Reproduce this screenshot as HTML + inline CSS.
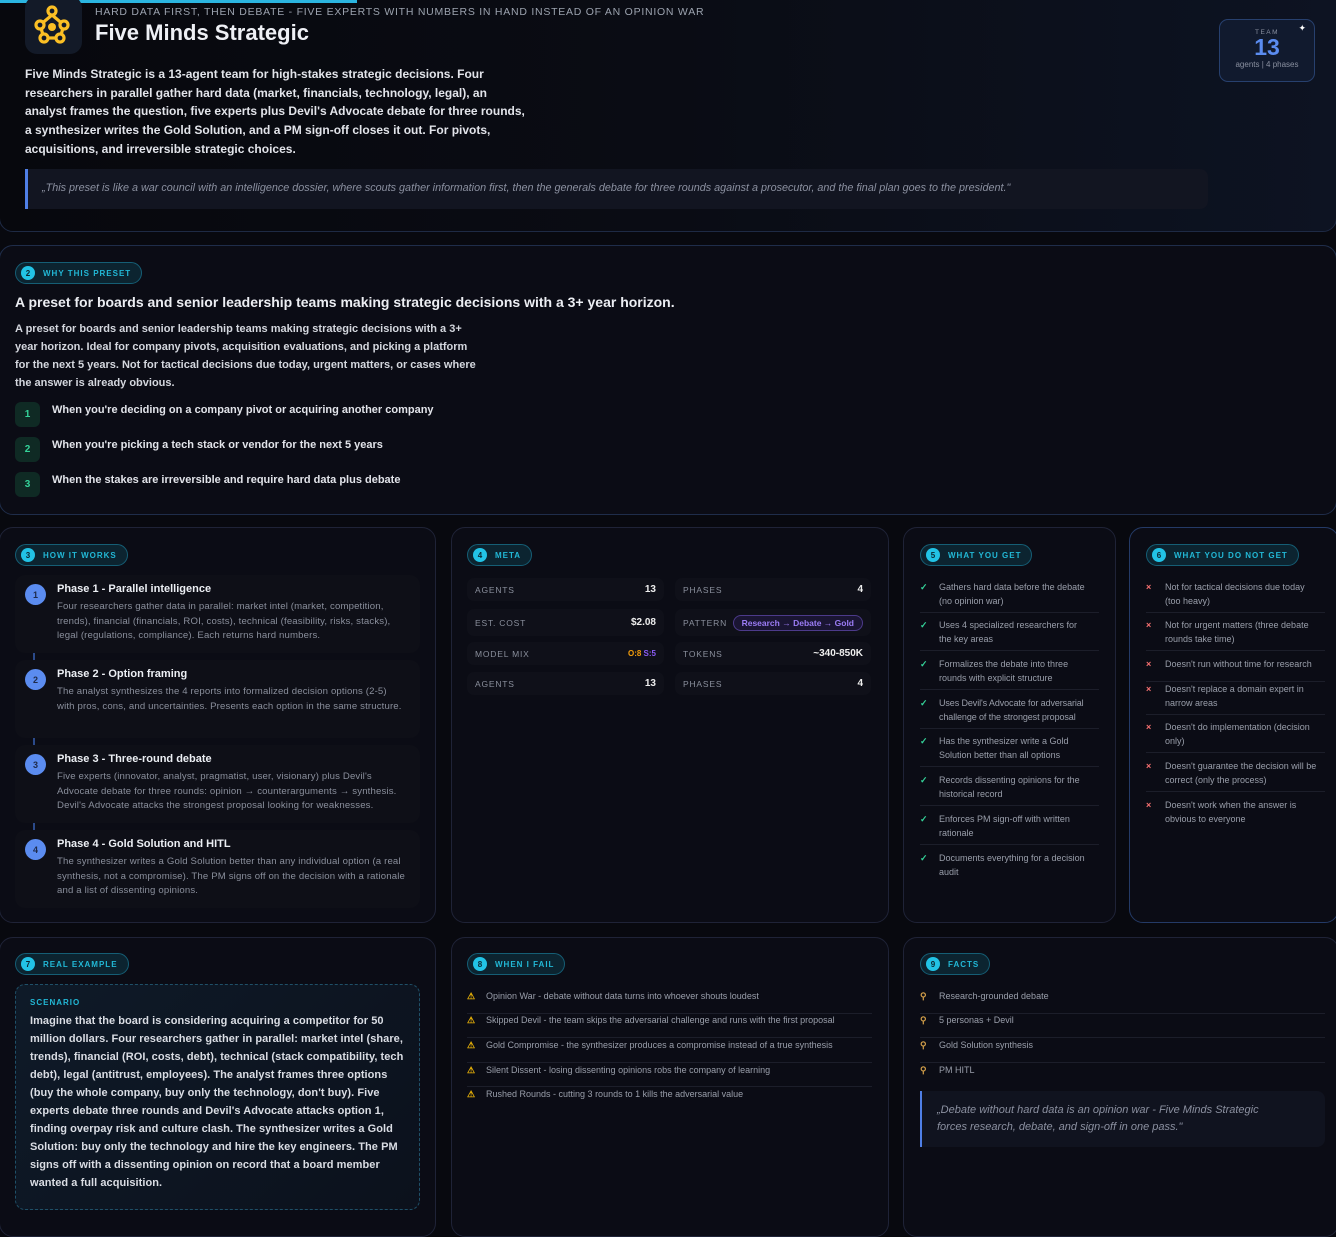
<!DOCTYPE html>
<html><head><meta charset="utf-8"><style>
*{box-sizing:border-box;margin:0;padding:0}
body{width:1336px;height:1231px;background:#08090f;font-family:"Liberation Sans",sans-serif;color:#e5e7eb;position:relative;overflow:hidden}
.card{position:absolute;border:1px solid #1f2337;border-radius:14px;background:#0b0c15}
.pill{position:absolute;height:22px;border:1px solid #155e75;background:#0c2430;border-radius:11px;display:flex;align-items:center;padding:0 10px 0 5px;font-size:8px;font-weight:bold;letter-spacing:1px;color:#22b8d6}
.pill b{width:14px;height:14px;border-radius:50%;background:#22c3e6;color:#0b2530;font-size:8px;display:inline-flex;align-items:center;justify-content:center;margin-right:8px;letter-spacing:0}
.abs{position:absolute}
.ph{position:absolute;left:15px;width:405px;height:78px;background:#0e0f17;border-radius:10px}
.ph .n{position:absolute;left:10px;top:9px;width:21px;height:21px;border-radius:50%;background:#5b8cf0;color:#1e2a4a;font-size:9px;font-weight:bold;display:flex;align-items:center;justify-content:center}
.ph h4{position:absolute;left:42px;top:8px;font-size:11px;color:#eceff4}
.ph p{position:absolute;left:42px;top:25px;width:348px;font-size:9.6px;line-height:14.5px;color:#8a8f9c;letter-spacing:.15px}
.conn{position:absolute;left:33px;width:2px;height:7px;background:#2b4a8a}
.mr{position:absolute;height:23px;background:#0f1019;border-radius:7px;font-size:8.5px;letter-spacing:.8px;color:#8a8f9c;display:flex;align-items:center;justify-content:space-between;padding:0 8px}
.mr span:last-child{color:#eee;font-weight:bold;letter-spacing:0;font-size:10px}
.li{position:absolute;font-size:9px;line-height:14px;color:#9a9fab;border-bottom:1px solid #1c1e2a}
.li i{position:absolute;left:0;top:0;font-style:normal;font-weight:bold}
.g{width:179px;padding-right:12px}
</style></head><body>
<!-- header -->
<div class="card" style="left:-1px;top:-14px;width:1338px;height:246px;background:linear-gradient(90deg,#07080d 0%,#0a0c14 50%,#0d1322 100%);border-color:#1e2a44"></div>
<div class="abs" style="left:0;top:0;width:357px;height:3px;background:#2bb5e0"></div>
<div class="abs" style="left:25px;top:-4px;width:57px;height:58px;background:#131a28;border-radius:12px"></div>
<svg class="abs" style="left:25px;top:0" width="57" height="54" viewBox="25 0 57 54"><g fill="none" stroke="#fbbf24" stroke-width="3.2"><path d="M52 15 L40 25 L44 38 L60 38 L64 25 Z"/><circle cx="52" cy="11" r="4" fill="#131a28"/><circle cx="40" cy="25" r="4" fill="#131a28"/><circle cx="64" cy="25" r="4" fill="#131a28"/><circle cx="44" cy="38" r="4" fill="#131a28"/><circle cx="60" cy="38" r="4" fill="#131a28"/></g><circle cx="52" cy="27" r="4" fill="#fbbf24"/></svg>
<div class="abs" style="left:95px;top:6px;font-size:10.5px;letter-spacing:.75px;color:#9ca3af">HARD DATA FIRST, THEN DEBATE - FIVE EXPERTS WITH NUMBERS IN HAND INSTEAD OF AN OPINION WAR</div>
<div class="abs" style="left:95px;top:20px;font-size:22px;font-weight:bold;color:#eef0f5">Five Minds Strategic</div>
<div class="abs" style="left:25px;top:65px;width:505px;font-size:12px;line-height:18.7px;font-weight:bold;color:#e2e4ea">Five Minds Strategic is a 13-agent team for high-stakes strategic decisions. Four researchers in parallel gather hard data (market, financials, technology, legal), an analyst frames the question, five experts plus Devil's Advocate debate for three rounds, a synthesizer writes the Gold Solution, and a PM sign-off closes it out. For pivots, acquisitions, and irreversible strategic choices.</div>
<div class="abs" style="left:25px;top:169px;width:1183px;height:40px;background:#121521;border-left:3px solid #4f7fe6;border-radius:0 8px 8px 0;font-size:10.8px;font-style:italic;color:#8b90a0;padding:13px 0 0 14px">„This preset is like a war council with an intelligence dossier, where scouts gather information first, then the generals debate for three rounds against a prosecutor, and the final plan goes to the president."</div>
<div class="abs" style="left:1219px;top:19px;width:96px;height:63px;border:1px solid #27406e;border-radius:9px;background:#111a2e;text-align:center">
<div style="font-size:6.5px;letter-spacing:1.5px;color:#8a90a0;margin-top:9px">TEAM</div>
<div style="font-size:23px;font-weight:bold;color:#5b8cf0;line-height:22px">13</div>
<div style="font-size:8px;color:#8a90a0;margin-top:2px">agents | 4 phases</div>
<div style="position:absolute;right:8px;top:3px;font-size:9px;color:#fff">✦</div></div>

<!-- section 2 -->
<div class="card" style="left:-1px;top:245px;width:1338px;height:270px;border-color:#1f2d4a"></div>
<div class="pill" style="left:15px;top:262px"><b>2</b>WHY THIS PRESET</div>
<div class="abs" style="left:15px;top:294px;font-size:14px;font-weight:bold;color:#eceef3">A preset for boards and senior leadership teams making strategic decisions with a 3+ year horizon.</div>
<div class="abs" style="left:15px;top:320px;width:462px;font-size:11px;line-height:18px;font-weight:bold;color:#d4d7de">A preset for boards and senior leadership teams making strategic decisions with a 3+ year horizon. Ideal for company pivots, acquisition evaluations, and picking a platform for the next 5 years. Not for tactical decisions due today, urgent matters, or cases where the answer is already obvious.</div>
<div class="abs" style="left:15px;top:402px;width:25px;height:25px;border-radius:6px;background:#0f2a24;color:#34d399;font-size:10px;font-weight:bold;text-align:center;line-height:25px">1</div>
<div class="abs" style="left:15px;top:437px;width:25px;height:25px;border-radius:6px;background:#0f2a24;color:#34d399;font-size:10px;font-weight:bold;text-align:center;line-height:25px">2</div>
<div class="abs" style="left:15px;top:472px;width:25px;height:25px;border-radius:6px;background:#0f2a24;color:#34d399;font-size:10px;font-weight:bold;text-align:center;line-height:25px">3</div>
<div class="abs" style="left:52px;top:404px;font-size:11px;font-weight:bold;color:#e2e4ea">When you're deciding on a company pivot or acquiring another company</div>
<div class="abs" style="left:52px;top:439px;font-size:11px;font-weight:bold;color:#e2e4ea">When you're picking a tech stack or vendor for the next 5 years</div>
<div class="abs" style="left:52px;top:474px;font-size:11px;font-weight:bold;color:#e2e4ea">When the stakes are irreversible and require hard data plus debate</div>

<!-- how it works -->
<div class="card" style="left:-1px;top:527px;width:437px;height:396px"></div>
<div class="pill" style="left:15px;top:544px"><b>3</b>HOW IT WORKS</div>
<div class="ph" style="top:575px"><div class="n">1</div><h4>Phase 1 - Parallel intelligence</h4><p>Four researchers gather data in parallel: market intel (market, competition, trends), financial (financials, ROI, costs), technical (feasibility, risks, stacks), legal (regulations, compliance). Each returns hard numbers.</p></div>
<div class="conn" style="top:653px"></div>
<div class="ph" style="top:660px"><div class="n">2</div><h4>Phase 2 - Option framing</h4><p>The analyst synthesizes the 4 reports into formalized decision options (2-5) with pros, cons, and uncertainties. Presents each option in the same structure.</p></div>
<div class="conn" style="top:738px"></div>
<div class="ph" style="top:745px"><div class="n">3</div><h4>Phase 3 - Three-round debate</h4><p>Five experts (innovator, analyst, pragmatist, user, visionary) plus Devil's Advocate debate for three rounds: opinion → counterarguments → synthesis. Devil's Advocate attacks the strongest proposal looking for weaknesses.</p></div>
<div class="conn" style="top:823px"></div>
<div class="ph" style="top:830px"><div class="n">4</div><h4>Phase 4 - Gold Solution and HITL</h4><p>The synthesizer writes a Gold Solution better than any individual option (a real synthesis, not a compromise). The PM signs off on the decision with a rationale and a list of dissenting opinions.</p></div>

<!-- meta -->
<div class="card" style="left:451px;top:527px;width:438px;height:396px"></div>
<div class="pill" style="left:467px;top:544px"><b>4</b>META</div>
<div class="mr" style="left:467px;top:578px;width:197px"><span>AGENTS</span><span>13</span></div>
<div class="mr" style="left:675px;top:578px;width:196px"><span>PHASES</span><span>4</span></div>
<div class="mr" style="left:467px;top:609px;width:197px;height:27px"><span>EST. COST</span><span>$2.08</span></div>
<div class="mr" style="left:675px;top:609px;width:196px;height:27px"><span>PATTERN</span><span style="border:1px solid #4c3a8a;background:#1a1533;color:#9b7cf5;border-radius:8px;padding:2px 8px;font-size:8.5px">Research → Debate → Gold</span></div>
<div class="mr" style="left:467px;top:642px;width:197px"><span>MODEL MIX</span><span style="font-size:8px"><span style="color:#f59e0b">O:8</span> <span style="color:#8b5cf6;font-size:8px">S:5</span></span></div>
<div class="mr" style="left:675px;top:642px;width:196px"><span>TOKENS</span><span>~340-850K</span></div>
<div class="mr" style="left:467px;top:672px;width:197px"><span>AGENTS</span><span>13</span></div>
<div class="mr" style="left:675px;top:672px;width:196px"><span>PHASES</span><span>4</span></div>

<!-- what you get -->
<div class="card" style="left:903px;top:527px;width:213px;height:396px"></div>
<div class="pill" style="left:920px;top:544px"><b>5</b>WHAT YOU GET</div>
<div class="card" style="left:1129px;top:527px;width:210px;height:396px;border-color:#243a66"></div>
<div class="pill" style="left:1146px;top:544px"><b>6</b>WHAT YOU DO NOT GET</div>

<div class="li g" style="left:920px;top:580px;height:33px;padding-left:19px"><i style="color:#34d399">✓</i>Gathers hard data before the debate (no opinion war)</div>
<div class="li g" style="left:920px;top:618px;height:33px;padding-left:19px"><i style="color:#34d399">✓</i>Uses 4 specialized researchers for the key areas</div>
<div class="li g" style="left:920px;top:657px;height:33px;padding-left:19px"><i style="color:#34d399">✓</i>Formalizes the debate into three rounds with explicit structure</div>
<div class="li" style="left:920px;top:696px;width:179px;height:33px;padding-left:19px;letter-spacing:-.1px"><i style="color:#34d399">✓</i>Uses Devil's Advocate for adversarial challenge of the strongest proposal</div>
<div class="li g" style="left:920px;top:734px;height:33px;padding-left:19px"><i style="color:#34d399">✓</i>Has the synthesizer write a Gold Solution better than all options</div>
<div class="li g" style="left:920px;top:773px;height:33px;padding-left:19px"><i style="color:#34d399">✓</i>Records dissenting opinions for the historical record</div>
<div class="li g" style="left:920px;top:812px;height:33px;padding-left:19px"><i style="color:#34d399">✓</i>Enforces PM sign-off with written rationale</div>
<div class="li g" style="left:920px;top:851px;height:33px;padding-left:19px;border:0"><i style="color:#34d399">✓</i>Documents everything for a decision audit</div>

<div class="li g" style="left:1146px;top:580px;height:33px;padding-left:19px"><i style="color:#f87171">×</i>Not for tactical decisions due today (too heavy)</div>
<div class="li g" style="left:1146px;top:618px;height:33px;padding-left:19px"><i style="color:#f87171">×</i>Not for urgent matters (three debate rounds take time)</div>
<div class="li" style="left:1146px;top:657px;width:179px;height:25px;padding-left:19px"><i style="color:#f87171">×</i>Doesn't run without time for research</div>
<div class="li g" style="left:1146px;top:682px;height:33px;padding-left:19px"><i style="color:#f87171">×</i>Doesn't replace a domain expert in narrow areas</div>
<div class="li g" style="left:1146px;top:720px;height:33px;padding-left:19px"><i style="color:#f87171">×</i>Doesn't do implementation (decision only)</div>
<div class="li" style="left:1146px;top:759px;width:179px;height:33px;padding-left:19px"><i style="color:#f87171">×</i>Doesn't guarantee the decision will be correct (only the process)</div>
<div class="li g" style="left:1146px;top:798px;height:33px;padding-left:19px;border:0"><i style="color:#f87171">×</i>Doesn't work when the answer is obvious to everyone</div>

<!-- real example -->
<div class="card" style="left:-1px;top:937px;width:437px;height:300px"></div>
<div class="pill" style="left:15px;top:953px"><b>7</b>REAL EXAMPLE</div>
<div class="abs" style="left:15px;top:984px;width:405px;height:226px;border:1px dashed #1f5068;border-radius:10px;background:linear-gradient(135deg,#0e1a28,#0c111c);padding:13px 14px">
<div style="font-size:8px;font-weight:bold;letter-spacing:1px;color:#22b8d6">SCENARIO</div>
<div style="font-size:11px;line-height:18px;font-weight:bold;color:#dadde4;margin-top:5px;letter-spacing:.05px">Imagine that the board is considering acquiring a competitor for 50 million dollars. Four researchers gather in parallel: market intel (share, trends), financial (ROI, costs, debt), technical (stack compatibility, tech debt), legal (antitrust, employees). The analyst frames three options (buy the whole company, buy only the technology, don't buy). Five experts debate three rounds and Devil's Advocate attacks option 1, finding overpay risk and culture clash. The synthesizer writes a Gold Solution: buy only the technology and hire the key engineers. The PM signs off with a dissenting opinion on record that a board member wanted a full acquisition.</div></div>

<!-- when i fail -->
<div class="card" style="left:451px;top:937px;width:438px;height:300px"></div>
<div class="pill" style="left:467px;top:953px"><b>8</b>WHEN I FAIL</div>
<div class="li" style="left:467px;top:989px;width:405px;height:25px;padding-left:19px"><i style="color:#eab308">⚠</i>Opinion War - debate without data turns into whoever shouts loudest</div>
<div class="li" style="left:467px;top:1013px;width:405px;height:25px;padding-left:19px"><i style="color:#eab308">⚠</i>Skipped Devil - the team skips the adversarial challenge and runs with the first proposal</div>
<div class="li" style="left:467px;top:1038px;width:405px;height:25px;padding-left:19px"><i style="color:#eab308">⚠</i>Gold Compromise - the synthesizer produces a compromise instead of a true synthesis</div>
<div class="li" style="left:467px;top:1063px;width:405px;height:24px;padding-left:19px"><i style="color:#eab308">⚠</i>Silent Dissent - losing dissenting opinions robs the company of learning</div>
<div class="li" style="left:467px;top:1087px;width:405px;height:24px;padding-left:19px;border:0"><i style="color:#eab308">⚠</i>Rushed Rounds - cutting 3 rounds to 1 kills the adversarial value</div>

<!-- facts -->
<div class="card" style="left:903px;top:937px;width:436px;height:300px"></div>
<div class="pill" style="left:920px;top:953px"><b>9</b>FACTS</div>
<div class="li" style="left:920px;top:989px;width:405px;height:25px;padding-left:19px"><i style="color:#d4a04a">⚲</i>Research-grounded debate</div>
<div class="li" style="left:920px;top:1013px;width:405px;height:25px;padding-left:19px"><i style="color:#d4a04a">⚲</i>5 personas + Devil</div>
<div class="li" style="left:920px;top:1038px;width:405px;height:25px;padding-left:19px"><i style="color:#d4a04a">⚲</i>Gold Solution synthesis</div>
<div class="li" style="left:920px;top:1063px;width:405px;height:24px;padding-left:19px;border:0"><i style="color:#d4a04a">⚲</i>PM HITL</div>
<div class="abs" style="left:920px;top:1091px;width:405px;height:56px;background:#10131f;border-left:2px solid #4f7fe6;border-radius:0 8px 8px 0;font-size:11px;line-height:17px;font-style:italic;color:#8b90a0;padding:11px 40px 0 15px">„Debate without hard data is an opinion war - Five Minds Strategic forces research, debate, and sign-off in one pass."</div>
</body></html>
